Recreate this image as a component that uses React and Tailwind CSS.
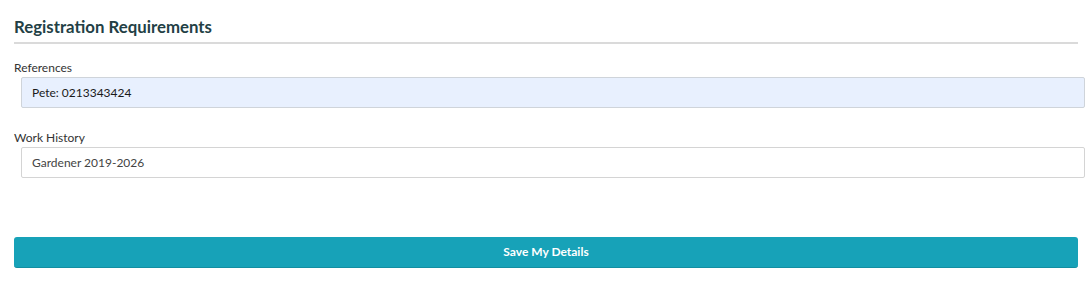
export default function App() {
  return (
    <div className="w-[1092px] h-[281px] bg-white px-[14px] pt-[15px] font-['Lato','Open_Sans',sans-serif] text-[#333]">
      <h2 className="text-[16.8px] font-bold text-[#233f45] leading-[24px] pb-[3px] border-b-2 border-[#dadada]">
        Registration Requirements
      </h2>
      <div className="mt-[16px]">
        <label className="block text-[12px] leading-[16px] text-[#333]">References</label>
        <div className="ml-[7px] mr-[-7px] mt-[1px] h-[31px] border border-[#cfd4da] rounded-[2px] bg-[#e8f0fe] flex items-center px-[10px] text-[12px] text-[#1a1a1a]">
          Pete: 0213343424
        </div>
      </div>
      <div className="mt-[22px]">
        <label className="block text-[12px] leading-[16px] text-[#333]">Work History</label>
        <div className="ml-[7px] mr-[-7px] mt-[1px] h-[31px] border border-[#d4d4d4] rounded-[2px] bg-white flex items-center px-[10px] text-[12px] text-[#444]">
          Gardener 2019-2026
        </div>
      </div>
      <button className="mt-[59px] w-full h-[31px] rounded-[3px] bg-[#17a2b8] border-b border-[#138ea1] text-white text-[12px] font-bold flex items-center justify-center">
        Save My Details
      </button>
    </div>
  );
}
